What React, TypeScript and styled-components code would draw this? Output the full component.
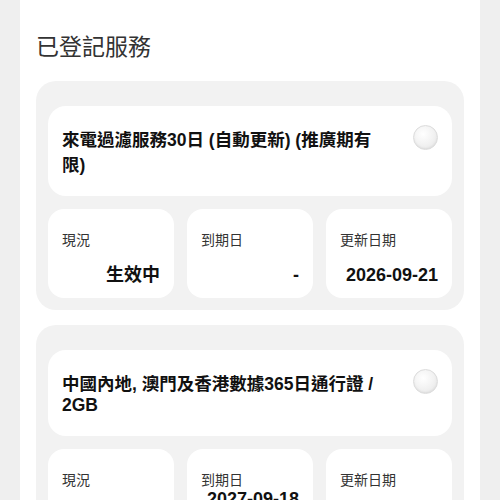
import React from "react";
import styled, { createGlobalStyle } from "styled-components";

const GlobalStyle = createGlobalStyle`
    html, body {
        margin: 0;
        padding: 0;
        background: #efefef;
        font-family: "Liberation Sans", "Noto Sans CJK TC", sans-serif;
        color: #111;
    }
`;

type Stat = { label: string; value: string[] };
type Service = { name: string; stats: Stat[] };

const services: Service[] = [
    {
        name: "來電過濾服務30日 (自動更新) (推廣期有限)",
        stats: [
            { label: "現況", value: ["生效中"] },
            { label: "到期日", value: ["-"] },
            { label: "更新日期", value: ["2026-09-21"] },
        ],
    },
    {
        name: "中國內地, 澳門及香港數據365日通行證 / 2GB",
        stats: [
            { label: "現況", value: ["生效中"] },
            { label: "到期日", value: ["2027-09-18", "23:59"] },
            { label: "更新日期", value: ["-"] },
        ],
    },
];

const App = () => {
    return (
        <>
            <GlobalStyle />
            <Panel>
                <Heading>已登記服務</Heading>
                <List>
                    {services.map((s) => (
                        <ServiceCard key={s.name}>
                            <TitleCard>
                                <TitleText>{s.name}</TitleText>
                                <Radio />
                            </TitleCard>
                            <StatsRow>
                                {s.stats.map((st) => (
                                    <StatBox key={st.label}>
                                        <StatLabel>{st.label}</StatLabel>
                                        <StatValue>
                                            {st.value.map((v) => (
                                                <div key={v}>{v}</div>
                                            ))}
                                        </StatValue>
                                    </StatBox>
                                ))}
                            </StatsRow>
                        </ServiceCard>
                    ))}
                </List>
            </Panel>
        </>
    );
};

export default App;

const Panel = styled.div`
    background: #ffffff;
    margin: 0 20px;
    padding: 28px 16px 40px;
    min-height: 500px;
    box-sizing: border-box;
`;

const Heading = styled.h2`
    margin: 0 0 19px 0;
    font-size: 23px;
    font-weight: 400;
    color: #333;
`;

const List = styled.div`
    display: flex;
    flex-direction: column;
    gap: 15px;
`;

const ServiceCard = styled.div`
    background: #f2f2f2;
    border-radius: 20px;
    padding: 25px 12px 12px;
    display: flex;
    flex-direction: column;
    gap: 13px;
`;

const TitleCard = styled.div`
    background: #ffffff;
    border-radius: 18px;
    padding: 20px 14px;
    display: flex;
    align-items: flex-start;
    gap: 20px;
`;

const TitleText = styled.div`
    flex: 1;
    font-size: 17.5px;
    font-weight: 700;
    color: #111;
`;

const Radio = styled.div`
    flex-shrink: 0;
    width: 25px;
    height: 25px;
    margin-top: -1px;
    border-radius: 50%;
    box-sizing: border-box;
    border: 1px solid #dcdcdc;
    background: radial-gradient(circle at 40% 35%, #ffffff 0%, #f1f1f1 55%, #e2e2e2 100%);
    box-shadow: inset 0 -1px 2px rgba(0, 0, 0, 0.06);
`;

const StatsRow = styled.div`
    display: grid;
    grid-template-columns: repeat(3, 1fr);
    gap: 13px;
`;

const StatBox = styled.div`
    background: #ffffff;
    border-radius: 16px;
    padding: 20px 14px 12px;
    min-height: 89px;
    box-sizing: border-box;
    display: flex;
    flex-direction: column;
    justify-content: space-between;
`;

const StatLabel = styled.div`
    font-size: 14px;
    color: #333;
`;

const StatValue = styled.div`
    font-size: 18px;
    font-weight: 700;
    color: #111;
    text-align: right;
`;
